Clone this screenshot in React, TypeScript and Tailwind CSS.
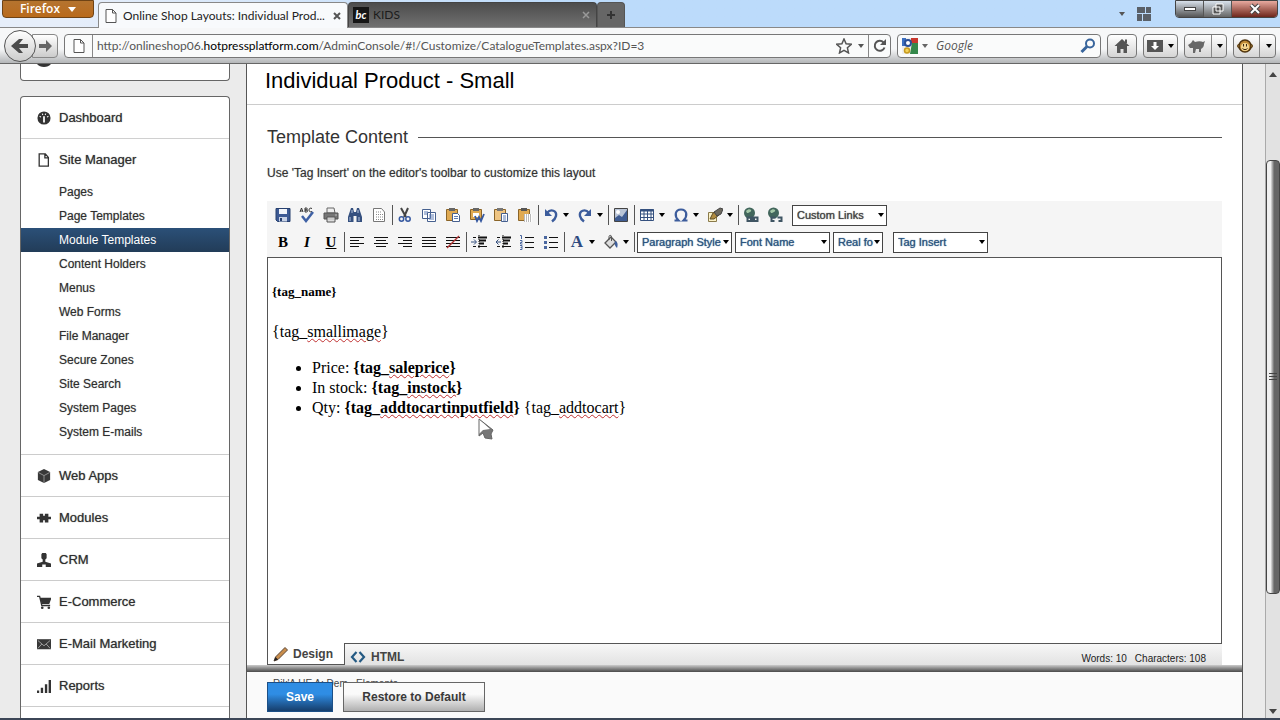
import React from "react";

type Kids = { children?: React.ReactNode };

const Pic = ({ children, size = "size-4" }: Kids & { size?: string }) => (
  <svg viewBox="0 0 16 16" className={size + " shrink-0"} fill="none" aria-hidden="true">
    {children}
  </svg>
);

const Caret = ({ cls = "text-black" }: { cls?: string }) => (
  <svg viewBox="0 0 6 4" className={"h-1 w-1.5 shrink-0 " + cls} aria-hidden="true">
    <path d="M0 0h6L3 4z" fill="currentColor" />
  </svg>
);

const PageIcon = () => (
  <Pic>
    <path d="M3 1.5h6.5L13 5v9.500H3z" fill="#fff" stroke="#555" />
    <path d="M9.500 1.500V5H13" stroke="#555" />
  </Pic>
);

/* ---------- toolbar drawings ---------- */

const navy = "#35507f";

const icons: Record<string, React.ReactNode> = {
  save: (
    <>
      <path d="M1 1.500h14v13H2.500L1 13z" fill="#3d5a94" stroke="#27406f" />
      <path d="M4 2h8v5H4z" fill="#f2f5fa" />
      <path d="M4 10h8v4.500H4z" fill="#c9d3e6" />
      <path d="M5 11h2v3H5z" fill="#27406f" />
    </>
  ),
  spell: (
    <>
      <path d="M1 5l1.500-4L4 5M1.500 4h2M6 1v4h1.500a1 1 0 0 0 0-2H6h1.300a1 1 0 0 0 0-2zM13 1.500c-2-1-3 .2-3 1.500s1 2.500 3 1.500" stroke="#333" />
      <path d="M3 9l4 5 7-9" stroke="#3f61a5" strokeWidth="2.500" />
    </>
  ),
  print: (
    <>
      <path d="M4 1h7l1 5H4z" fill="#eee" stroke="#666" />
      <path d="M1 6h14v6H1z" fill="#777" stroke="#555" />
      <path d="M4 10h8v5H4z" fill="#ddd" stroke="#555" />
      <path d="M5 12h6M12 8h2" stroke="#bbb" />
    </>
  ),
  find: (
    <>
      <path d="M4 1h2l1 4h2l1-4h2l3 9v5H9.500V9h-3v6H1v-5z" fill={navy} />
      <path d="M3 10v4M12 10v4M5 3v3M11 3v3" stroke="#b9c8e4" />
    </>
  ),
  preview: (
    <>
      <path d="M2.500 1.500h8L13.500 5v9.500h-11z" fill="#fff" stroke="#777" />
      <path d="M5 5h5M5 7.500h7M5 10h7M5 12.500h7" stroke="#888" strokeDasharray="1 1" />
    </>
  ),
  cut: (
    <>
      <path d="M4 1l5 9M11 1L7 10" stroke="#444" strokeWidth="2" />
      <circle cx="4.500" cy="12" r="2.200" stroke="#3558a0" strokeWidth="1.500" />
      <circle cx="11" cy="12" r="2.200" stroke="#3558a0" strokeWidth="1.500" />
    </>
  ),
  copy: (
    <>
      <path d="M1.500 2.500h8v9h-8zM6.500 5.500h8v9h-8z" fill="#fff" stroke="#46608f" />
      <path d="M3 5h4M3 7h3M8 8h5M8 10h5M8 12h5" stroke="#5f7db5" />
    </>
  ),
  paste: (
    <>
      <path d="M1.500 2.500h11v11h-11z" fill="#e0aa52" stroke="#8a6428" />
      <path d="M4 1h6v3H4z" fill="#666" />
      <path d="M7.500 6.500h5l2 2v6h-7z" fill="#fff" stroke="#46608f" />
      <path d="M9 9.500h4M9 11.500h4" stroke="#5f7db5" />
    </>
  ),
  pasteword: (
    <>
      <path d="M1.500 2.500h11v10h-11z" fill="#e0aa52" stroke="#8a6428" />
      <path d="M4 1h6v3H4z" fill="#666" />
      <path d="M4 6h6v4H4z" fill="#fff" />
      <path d="M6 9l2 5 2-4 2 4 3-7" stroke="#3558a0" strokeWidth="1.800" />
    </>
  ),
  pasteplain: (
    <>
      <path d="M1.500 2.500h11v11h-11z" fill="#efc583" stroke="#8a6428" />
      <path d="M4 1h6v3H4z" fill="#777" />
      <path d="M8.500 6.500h6v8h-6z" fill="#fff" stroke="#46608f" />
      <path d="M10 9h3M10 11h3M10 13h3" stroke="#5f7db5" />
    </>
  ),
  pastehtml: (
    <>
      <path d="M1.500 2.500h11v11h-11z" fill="#e0aa52" stroke="#8a6428" />
      <path d="M4 1h6v3H4z" fill="#555" />
      <path d="M7 7h8v8H7z" fill="#fff" />
      <path d="M7 8h8M7 10h8M7 12h8M7 14h8" stroke="#777" strokeDasharray="1 1" />
    </>
  ),
  undo: (
    <>
      <path d="M4 6c4-5 10-2 9 3-.5 2.500-2 4-4 5.500" stroke="#3c5c9c" strokeWidth="2.400" />
      <path d="M2 2v7h7z" fill="#3c5c9c" />
    </>
  ),
  redo: (
    <>
      <path d="M12 6C8 1 2 4 3 9c.5 2.500 2 4 4 5.500" stroke="#3c5c9c" strokeWidth="2.400" />
      <path d="M14 2v7H7z" fill="#3c5c9c" />
    </>
  ),
  image: (
    <>
      <path d="M1.500 1.500h13v13h-13z" fill="#b9c4d6" stroke="#444" />
      <path d="M2 14V11l4-3 3 2 5-7v11z" fill="#3f5c92" />
      <circle cx="5" cy="5" r="2" fill="#fff" />
    </>
  ),
  table: (
    <>
      <path d="M1.500 2.500h13v11h-13z" fill="#fff" stroke={navy} />
      <path d="M1 3.500h14" stroke={navy} strokeWidth="2" />
      <path d="M1 7h14M1 10.500h14M5 3v10.500M8.500 3v10.500M12 3v10.500" stroke={navy} />
    </>
  ),
  omega: (
    <path d="M1.500 13.500H5.500C1 9 2 2.500 8 2.500s7 6.500 2.500 11h4" stroke="#3c5c9c" strokeWidth="2.200" />
  ),
  brush: (
    <>
      <path d="M1.500 5.500h8v9h-8z" fill="#fbf2c8" stroke="#8a7a4a" />
      <path d="M3 12l3-6 5-2 1 4-5 4z" fill="#b08b3f" stroke="#5c4b27" />
      <path d="M7 5l6-4 3 1-2 5-4 2z" fill="#6d6a60" stroke="#444" />
    </>
  ),
  link: (
    <>
      <circle cx="6.500" cy="6" r="5.500" fill="#42665c" />
      <path d="M3 4c2-2 4-2 5-1S6 6 4 6z" fill="#a5c9a8" />
      <path d="M4.500 10.500h4v3.500h-4zM10.500 10.500h4v3.500h-4zM7 12h5" stroke="#3f5563" strokeWidth="2" />
    </>
  ),
  unlink: (
    <>
      <circle cx="6.500" cy="6" r="5.500" fill="#42665c" />
      <path d="M3 4c2-2 4-2 5-1S6 6 4 6z" fill="#a5c9a8" />
      <path d="M8.500 10.500h-4v3.500h3M10.500 10.500h4v3.500h-3" stroke="#3f5563" strokeWidth="2" />
    </>
  ),
  left: <path d="M1 3.500h14M1 6.500h9M1 9.500h14M1 12.500h9" stroke="#111" />,
  center: <path d="M1 3.500h14M3 6.500h10M1 9.500h14M3 12.500h10" stroke="#111" />,
  right: <path d="M1 3.500h14M6 6.500h9M1 9.500h14M6 12.500h9" stroke="#111" />,
  justify: <path d="M1 3.500h14M1 6.500h14M1 9.500h14M1 12.500h14" stroke="#111" />,
  nojustify: (
    <>
      <path d="M1 3.500h14M1 6.500h14M1 9.500h14M1 12.500h14" stroke="#111" />
      <path d="M2 14L14 2" stroke="#b03434" strokeWidth="1.500" />
    </>
  ),
  indent: (
    <>
      <path d="M8 1v14" stroke="#111" strokeDasharray="1 1" />
      <path d="M7 3.500h9M8 6.500h7M8 9.500h5" stroke="#111" strokeWidth="2" />
      <path d="M7 12.500h9M2 12.500h3M2 3.500h3" stroke="#111" />
      <path d="M0 8h5M3 5.500L5.500 8 3 10.500" stroke="#35507f" />
    </>
  ),
  outdent: (
    <>
      <path d="M8 1v14" stroke="#111" strokeDasharray="1 1" />
      <path d="M7 3.500h9M8 6.500h7M8 9.500h5" stroke="#111" strokeWidth="2" />
      <path d="M7 12.500h9M2 12.500h3M2 3.500h3" stroke="#111" />
      <path d="M1 8h5M3.500 5.500L1 8l2.500 2.500" stroke="#35507f" />
    </>
  ),
  ol: (
    <>
      <path d="M6 3.500h9M6 8.500h9M6 13.500h9" stroke="#111" />
      <path d="M1 1.500h1.500V5M1 6.500h2v2H1.500v1.500H3.500M1 11.500h2v4H1M1.500 13.500H3" stroke="#4a679f" />
    </>
  ),
  ul: (
    <>
      <path d="M6 3.500h9M6 8.500h9M6 13.500h9" stroke="#111" />
      <path d="M1 2h3v3H1zM1 7h3v3H1zM1 12h3v3H1z" fill="#4a679f" />
    </>
  ),
  bucket: (
    <>
      <path d="M2 9l6-6 5 5-6 6z" fill="#ddd" stroke="#555" strokeWidth="1.300" />
      <path d="M6 6V2.500c0-1.500 2.500-1.500 2.500 0V7" stroke="#555" />
      <path d="M12 7c3 1 3 4 2 7-2-2-3-4-2-7z" fill="#3f5f9c" />
    </>
  ),
};

const Tool = ({ name, label, drop }: { name: string; label: string; drop?: boolean }) => (
  <button type="button" aria-label={label} className={"flex h-6 shrink-0 items-center pl-1 " + (drop ? "w-[34px] gap-1" : "w-6")}>
    <Pic>{icons[name]}</Pic>
    {drop && <Caret />}
  </button>
);

const Letter = ({ children, label }: Kids & { label: string }) => (
  <button type="button" aria-label={label} className="h-6 w-6 shrink-0 text-center font-['Liberation_Serif',serif] text-[15px] leading-6 font-bold text-black">
    {children}
  </button>
);

const Sep = () => (
  <div className="flex h-5 w-0.5 shrink-0 justify-center">
    <div className="w-px bg-[#555]" />
  </div>
);

const Drop = ({ label, cls }: { label: string; cls: string }) => (
  <div className={"relative shrink-0 " + cls}>
    <select aria-label={label} className="block h-[21px] w-full appearance-none overflow-hidden border border-[#444] bg-white pl-1 text-[11px] leading-[19px] [text-shadow:0_0_1px_currentColor]">
      <option>{label}</option>
    </select>
    <span className="pointer-events-none absolute top-0 right-[3px] flex h-[21px] items-center">
      <Caret />
    </span>
  </div>
);

/* ---------- browser frame ---------- */

const NavButton = ({ label, cls, children }: Kids & { label: string; cls: string }) => (
  <button type="button" aria-label={label} className={"flex h-6 shrink-0 items-center justify-around rounded-sm border border-[#777] bg-linear-to-b from-white to-[#d5d5d5] text-[#555] " + cls}>
    {children}
  </button>
);

const Browser = () => (
  <header className="shrink-0 font-['Lato','Open_Sans',sans-serif]">
    <div className="flex h-7 items-start border-b border-[#888] bg-linear-to-r from-[#e6eefa] from-5% to-[#bcdbfb] to-45%">
      <button type="button" className="ml-0.5 flex h-[18px] w-[92px] shrink-0 items-center justify-center gap-2 rounded-b border border-[#6f4315] bg-linear-to-b from-[#b5742f] to-[#b96a1b] font-['Open_Sans',sans-serif] text-[12px] leading-4 font-semibold text-white">
        Firefox
        <svg viewBox="0 0 8 5" className="h-[5px] w-2" aria-hidden="true"><path d="M0 0h8L4 5z" fill="#fff" /></svg>
      </button>
      <div className="mt-0.5 ml-1 flex h-[26px] w-[250px] shrink-0 items-center rounded-t border border-b-0 border-[#888] bg-[#f8fafc] pl-1">
        <PageIcon />
        <span className="ml-1 flex-1 text-[12px] whitespace-nowrap text-[#222]">Online Shop Layouts: Individual Prod...</span>
        <button type="button" aria-label="Close tab" className="mr-1.5 shrink-0 text-[#555]">
          <svg viewBox="0 0 8 8" className="size-2" aria-hidden="true"><path d="M1 1l6 6M7 1L1 7" stroke="currentColor" strokeWidth="2" /></svg>
        </button>
      </div>
      <div className="mt-0.5 flex h-[25px] w-[249px] shrink-0 items-center rounded-t border border-b-0 border-[#444] bg-linear-to-b from-[#4d4d4d] to-[#707070] pl-1">
        <span className="flex size-4 items-center justify-center bg-[#161616] text-[11px] leading-3 font-bold text-white italic">bc</span>
        <span className="ml-1 flex-1 text-[12px] text-[#1c1c1c]">KIDS</span>
        <button type="button" aria-label="Close tab" className="mr-1.5 text-[#999]">
          <svg viewBox="0 0 8 8" className="size-2" aria-hidden="true"><path d="M1 1l6 6M7 1L1 7" stroke="currentColor" strokeWidth="1.500" /></svg>
        </button>
      </div>
      <button type="button" aria-label="New tab" className="mt-0.5 flex h-[25px] w-7 shrink-0 items-center justify-center rounded-t border border-b-0 border-[#555] bg-[#666] text-[#333]">
        <svg viewBox="0 0 10 10" className="size-2.5" aria-hidden="true"><path d="M5 1v8M1 5h8" stroke="currentColor" strokeWidth="2" /></svg>
      </button>
      <div className="ml-auto flex h-full items-start pr-0.5">
        <div className="mt-3 mr-3"><Caret cls="text-[#555]" /></div>
        <svg viewBox="0 0 14 14" className="mt-[7px] mr-6 size-3.5" aria-hidden="true">
          <path d="M0 0h8v6H0zM9 0h5v6H9zM0 7h5v7H0zM6 7h8v7H6z" fill="#5a6068" />
        </svg>
        <div className="flex h-[18px] overflow-hidden rounded-b border border-[#444]">
          <button type="button" aria-label="Minimize" className="flex w-7 items-center justify-center border-r border-[#555] bg-linear-to-b from-[#d9e2ec] to-[#555]">
            <span className="h-1 w-3 border border-[#444] bg-white" />
          </button>
          <button type="button" aria-label="Restore" className="flex w-7 items-center justify-center border-r border-[#555] bg-linear-to-b from-[#d9e2ec] to-[#666]">
            <svg viewBox="0 0 12 12" className="size-3" aria-hidden="true"><path d="M4 1h7v7H4zM1 4h7v7H1z" fill="#555" stroke="#fff" /></svg>
          </button>
          <button type="button" aria-label="Close" className="flex w-[45px] items-center justify-center bg-linear-to-b from-[#e8aaa0] to-[#6e261c]">
            <svg viewBox="0 0 12 12" className="size-3" aria-hidden="true"><path d="M2 2l8 8M10 2l-8 8" stroke="#444" strokeWidth="4" /><path d="M2 2l8 8M10 2l-8 8" stroke="#fff" strokeWidth="2" /></svg>
          </button>
        </div>
      </div>
    </div>
    <div className="flex h-9 items-center border-b border-[#666] bg-linear-to-b from-[#f6f7f8] from-60% to-[#b4b6b8] pr-1 pl-1">
      <button type="button" aria-label="Back" className="z-10 flex size-8 shrink-0 items-center justify-center rounded-full border border-[#555] bg-linear-to-b from-white to-[#ccc]">
        <svg viewBox="0 0 18 16" className="h-4 w-[18px]" aria-hidden="true"><path d="M0 8l8-7h4L8 6h9v4H8l4 5H8z" fill="#4c4c4c" /></svg>
      </button>
      <button type="button" aria-label="Forward" className="-ml-1 flex h-6 w-[26px] shrink-0 items-center justify-center rounded-r-sm border border-[#888] bg-linear-to-b from-white to-[#ccc]">
        <svg viewBox="0 0 14 14" className="size-3.5" aria-hidden="true"><path d="M14 7L8 1v4H1v4h7v4z" fill="#666" /></svg>
      </button>
      <div className="ml-1.5 flex h-6 min-w-0 flex-1 items-center rounded-sm border border-[#777] bg-[#fafbfb]">
        <span className="flex h-full w-7 shrink-0 items-center justify-center border-r border-[#888]"><PageIcon /></span>
        <p className="ml-1 min-w-0 flex-1 truncate text-[12px] text-[#555]">
          http://onlineshop06.<span className="text-black">hotpressplatform.com</span>/AdminConsole/#!/Customize/CatalogueTemplates.aspx?ID=3
        </p>
        <button type="button" aria-label="Bookmark" className="flex items-center gap-1.5 pr-1">
          <Pic><path d="M8 1l2.100 4.800 5.200.5-3.900 3.500 1.100 5.100L8 12.300l-4.500 2.600 1.100-5.100L.7 6.300l5.200-.5z" stroke="#555" strokeWidth="1.500" /></Pic>
          <Caret cls="text-[#555]" />
        </button>
        <button type="button" aria-label="Reload" className="flex h-full w-[22px] items-center justify-center border-l border-[#888]">
          <Pic><path d="M12.500 9.500a5 5 0 1 1-1-5" stroke="#555" strokeWidth="2" /><path d="M14 1v6H8z" fill="#555" /></Pic>
        </button>
      </div>
      <div className="ml-1.5 flex h-6 w-[204px] shrink-0 items-center rounded-sm border border-[#777] bg-[#fafbfb] pr-1 pl-1">
        <Pic>
          <path d="M0 0h16v16H0z" fill="#eee" />
          <path d="M9 0h7v5H9z" fill="#c8382e" /><path d="M10 5h6v11H8z" fill="#34884b" />
          <path d="M0 0h4v8H0z" fill="#3c6fc0" />
          <circle cx="6" cy="5" r="3" fill="#fff" stroke="#2b4f96" strokeWidth="2" />
          <circle cx="5" cy="12.500" r="2.500" fill="#f4d35a" stroke="#c79b20" strokeWidth="1.500" />
        </Pic>
        <span className="ml-1"><Caret cls="text-[#666]" /></span>
        <input aria-label="Search Google" placeholder="Google" className="ml-2 min-w-0 flex-1 bg-transparent font-['Open_Sans',sans-serif] text-[12px] italic outline-none placeholder:text-[#555]" />
        <Pic><circle cx="10" cy="5.500" r="4" stroke="#38659c" strokeWidth="2" /><path d="M7 8.500L1.500 14" stroke="#38659c" strokeWidth="3" /></Pic>
      </div>
      <NavButton label="Home" cls="ml-1.5 w-[30px]">
        <Pic><path d="M8 1l7.500 7H13v7H9.500v-4h-3v4H3V8H.5z" fill="#555" /><path d="M11 1.500h2V5h-2z" fill="#555" /></Pic>
      </NavButton>
      <NavButton label="Downloads" cls="ml-1.5 w-[35px]">
        <Pic><path d="M0 2h16v12H0z" fill="#555" /><path d="M6.500 4h3v4H12l-4 4-4-4h2.500z" fill="#fff" /></Pic>
        <Caret />
      </NavButton>
      <NavButton label="Add-on" cls="ml-1.5 w-[43px]">
        <svg viewBox="0 0 18 16" className="h-4 w-[18px]" aria-hidden="true"><path d="M0 7l3-2 2-3 2 2c3-1 6-1 8 0l2-1-1 3c0 2-1 4-3 5v3h-2v-3H8l-1 4H5v-5L2 10z" fill="#686868" /></svg>
        <span className="h-full w-px bg-[#888]" />
        <Caret />
      </NavButton>
      <NavButton label="Monkey scripts" cls="ml-1.5 w-[43px]">
        <Pic>
          <circle cx="2.500" cy="8" r="2" fill="#d9ac55" stroke="#5c3f16" /><circle cx="13.500" cy="8" r="2" fill="#d9ac55" stroke="#5c3f16" />
          <circle cx="8" cy="8" r="6" fill="#c08a34" stroke="#4f3510" strokeWidth="1.500" />
          <ellipse cx="8" cy="9" rx="4" ry="4" fill="#f4d691" />
          <path d="M6.500 6v2.500M9.500 6v2.500M5.500 10.500c1.500 1.500 3.500 1.500 5 0" stroke="#3d290d" />
        </Pic>
        <span className="h-full w-px bg-[#888]" />
        <Caret />
      </NavButton>
    </div>
  </header>
);

/* ---------- sidebar ---------- */

const menuIcons: Record<string, React.ReactNode> = {
  dashboard: (
    <>
      <circle cx="8" cy="8" r="7.500" fill="#333" />
      <path d="M3 6l1.500 1M6 3l.7 1.500M10 3l-.7 1.500M13 6l-1.500 1" stroke="#fff" strokeWidth="1.200" />
      <path d="M8 6v7" stroke="#fff" strokeWidth="2" />
    </>
  ),
  page: <path d="M2.500 1h7L13 5v10H2.500zM9 1v4.500h4" stroke="#333" strokeWidth="1.500" />,
  cube: (
    <>
      <path d="M8 0l7 3.500v9L8 16l-7-3.500v-9z" fill="#383838" />
      <path d="M1.500 4L8 7.500 14.500 4M8 7.500V16" stroke="#999" />
    </>
  ),
  modules: <path d="M3 3h4v2.500h2V3h4v3.500h3v3h-3V13H9v-2.500H7V13H3V9.500H0v-3h3z" fill="#333" />,
  crm: <path d="M6 0h4l1 1.500V6L9.500 7.500V10l6.500 2v4h-6v-3H6v3H0v-4l6.500-2V7.500L5 6V1.500z" fill="#333" />,
  cart: (
    <>
      <path d="M0 1.500h3L5.500 12H15M4 4h11.500l-2 5.500H5" stroke="#333" strokeWidth="1.500" />
      <path d="M4 4h11.500l-2 5.500H5z" fill="#333" />
      <circle cx="6" cy="14.500" r="1.500" fill="#333" /><circle cx="13.500" cy="14.500" r="1.500" fill="#333" />
    </>
  ),
  mail: (
    <>
      <path d="M0 2.500h16v11.500H0z" fill="#383838" />
      <path d="M1 4l7 6 7-6M1 13l4.500-5M15 13l-4.500-5" stroke="#aaa" />
    </>
  ),
  reports: <path d="M0 13h2.500v3H0zM4.300 10h2.700v6H4.300zM9 6h2.700v10H9zM13.300 1H16v15h-2.700z" fill="#333" />,
};

const MenuHead = ({ icon, label }: { icon: string; label: string }) => (
  <a href="#" className="flex items-center gap-2 pl-4 text-[13px] leading-5 text-[#2e2e2e] [text-shadow:0_0_1px_#777]">
    <Pic size="size-3.5">{menuIcons[icon]}</Pic>
    {label}
  </a>
);

const subItems = ["Pages", "Page Templates", "Module Templates", "Content Holders", "Menus", "Web Forms", "File Manager", "Secure Zones", "Site Search", "System Pages", "System E-mails"];

const rest = [
  ["cube", "Web Apps"],
  ["modules", "Modules"],
  ["crm", "CRM"],
  ["cart", "E-Commerce"],
  ["mail", "E-Mail Marketing"],
  ["reports", "Reports"],
];

const Sidebar = () => (
  <aside className="flex w-[210px] shrink-0 flex-col">
    <div className="h-[17px] shrink-0 overflow-hidden rounded-b border border-t-0 border-[#666] bg-white pl-4">
      <svg viewBox="0 0 14 4" className="h-1 w-3.5" aria-hidden="true"><path d="M0 0h14c-3 4-11 4-14 0z" fill="#333" /></svg>
    </div>
    <nav aria-label="Admin menu" className="mt-[15px] min-h-0 flex-1 overflow-hidden rounded-t border border-b-0 border-[#666] bg-white">
      <ul>
        <li className="border-b border-[#d0d0d0] pt-[11px] pb-2.5"><MenuHead icon="dashboard" label="Dashboard" /></li>
        <li className="border-b border-[#ccc] pt-[11px] pb-2.5">
          <MenuHead icon="page" label="Site Manager" />
          <ul className="mt-2.5">
            {subItems.map((s) => (
              <li key={s}>
                <a
                  href="#"
                  className={
                    "block pl-[38px] text-[12px] leading-6 " +
                    (s === "Module Templates" ? "bg-linear-to-b from-[#2b5078] to-[#223c58] text-white" : "text-[#2e2e2e] [text-shadow:0_0_1px_#999]")
                  }
                >
                  {s}
                </a>
              </li>
            ))}
          </ul>
        </li>
        {rest.map(([i, l]) => (
          <li key={l} className="border-b border-[#ccc] pt-[11px] pb-2.5"><MenuHead icon={i} label={l} /></li>
        ))}
      </ul>
    </nav>
  </aside>
);

/* ---------- editor ---------- */

const Toolbar = () => (
  <div role="toolbar" aria-label="Editor" className="flex flex-col gap-px bg-[#f5f5f5] pt-px pb-0.5 pl-1">
    <div className="flex h-[26px] items-center text-[#444]">
      <Tool name="save" label="Save" />
      <Tool name="spell" label="Spell check" />
      <Tool name="print" label="Print" />
      <Tool name="find" label="Find" />
      <Tool name="preview" label="Preview" />
      <Sep />
      <Tool name="cut" label="Cut" />
      <Tool name="copy" label="Copy" />
      <Tool name="paste" label="Paste" />
      <Tool name="pasteword" label="Paste from Word" />
      <Tool name="pasteplain" label="Paste plain text" />
      <Tool name="pastehtml" label="Paste as HTML" />
      <Sep />
      <Tool name="undo" label="Undo" drop />
      <Tool name="redo" label="Redo" drop />
      <Sep />
      <Tool name="image" label="Image" />
      <Sep />
      <Tool name="table" label="Table" drop />
      <Tool name="omega" label="Symbol" drop />
      <Tool name="brush" label="Format" drop />
      <Sep />
      <Tool name="link" label="Link" />
      <Tool name="unlink" label="Remove link" />
      <Drop label="Custom Links" cls="ml-[5px] w-[95px]" />
    </div>
    <div className="flex h-[26px] items-center text-[#2b5580]">
      <Letter label="Bold">B</Letter>
      <Letter label="Italic"><i>I</i></Letter>
      <Letter label="Underline"><u>U</u></Letter>
      <Sep />
      <Tool name="left" label="Align left" />
      <Tool name="center" label="Align center" />
      <Tool name="right" label="Align right" />
      <Tool name="justify" label="Justify" />
      <Tool name="nojustify" label="No alignment" />
      <Sep />
      <Tool name="indent" label="Indent" />
      <Tool name="outdent" label="Outdent" />
      <Tool name="ol" label="Numbered list" />
      <Tool name="ul" label="Bulleted list" />
      <Sep />
      <button type="button" aria-label="Text color" className="flex h-6 w-[34px] shrink-0 items-center gap-1 pl-1">
        <span className="w-4 text-center font-['Liberation_Serif',serif] text-[17px] font-bold text-[#2f4a80]">A</span>
        <Caret />
      </button>
      <Tool name="bucket" label="Fill color" drop />
      <Sep />
      <div className="flex gap-[3px] pl-0.5">
        <Drop label="Paragraph Style" cls="w-[95px]" />
        <Drop label="Font Name" cls="w-[95px]" />
        <Drop label="Real fo" cls="w-[50px]" />
      </div>
      <Drop label="Tag Insert" cls="ml-2.5 w-[95px]" />
    </div>
  </div>
);

const Sq = ({ children }: Kids) => (
  <span className="underline decoration-[#c03030] decoration-wavy decoration-1 underline-offset-1">{children}</span>
);

const Editor = () => (
  <div className="mt-5 flex min-h-0 flex-1 flex-col">
    <Toolbar />
    <div className="relative min-h-0 flex-1 border border-b-0 border-[#555] bg-white px-1 font-['Liberation_Serif',serif] text-[16px] leading-5 text-black">
      <h5 className="mt-6 text-[13px] font-bold">{"{tag_name}"}</h5>
      <p className="mt-5">{"{tag_"}<Sq>smallimage</Sq>{"}"}</p>
      <ul className="mt-4 list-disc pl-10">
        <li>Price: <b>{"{tag_"}<Sq>saleprice</Sq>{"}"}</b></li>
        <li>In stock: <b>{"{tag_"}<Sq>instock</Sq>{"}"}</b></li>
        <li>Qty: <b>{"{tag_"}<Sq>addtocartinputfield</Sq>{"}"}</b> {"{tag_"}<Sq>addtocart</Sq>{"}"}</li>
      </ul>
      <svg viewBox="0 0 16 22" className="absolute top-[160px] left-[210px] h-[22px] w-4" aria-hidden="true">
        <path d="M1 1v17l4-3 2 5 7 1-1-5 2-4z" fill="#777" />
        <path d="M1 1v15l4-4 7-1z" fill="#fff" />
        <path d="M1 1v17l4-3 2 5 7 1-1-5 2-4z" fill="none" stroke="#666" />
      </svg>
    </div>
    <div className="flex h-[22px] shrink-0 items-stretch text-[12px] font-bold text-[#444]">
      <button type="button" className="flex w-[78px] shrink-0 items-center gap-1 border border-t-0 border-[#555] bg-white pl-[5px]">
        <Pic>
          <path d="M1 15l1.500-4L12 1.500 14.500 4 5 13.500z" fill="#c98d4b" stroke="#5b4636" />
          <path d="M1 15l1.500-4L5 13.500z" fill="#222" />
        </Pic>
        Design
      </button>
      <div className="flex flex-1 items-center border-t border-[#555] bg-linear-to-b from-[#f7f7f7] to-[#e2e2e2] pt-1">
        <button type="button" className="flex items-center gap-[5px] pl-[5px]">
          <Pic><path d="M6.500 3L2 8l4.500 5M9.500 3L14 8l-4.500 5" stroke="#245a83" strokeWidth="2.200" /></Pic>
          HTML
        </button>
        <p className="mt-1 mr-4 ml-auto flex gap-2 text-[10px] font-normal text-[#222]">
          <span>Words: 10</span>
          <span>Characters: 108</span>
        </p>
      </div>
    </div>
  </div>
);

export default function App() {
  return (
    <div className="flex h-screen flex-col overflow-hidden bg-[#ebebeb] font-['Liberation_Sans',Arial,sans-serif]">
      <Browser />
      <div className="flex min-h-0 flex-1 pl-5">
        <Sidebar />
        <main className="ml-4 flex min-w-0 flex-1 flex-col border-x border-[#555] bg-white">
          <h1 className="shrink-0 border-b border-[#ccc] pt-px pb-[7px] pl-[18px] text-[22px] leading-8 text-black">Individual Product - Small</h1>
          <section className="flex min-h-0 flex-1 flex-col px-5 pt-5">
            <div className="flex items-center gap-2.5">
              <h2 className="text-[18px] leading-6 text-[#333]">Template Content</h2>
              <div className="h-px flex-1 bg-[#555]" />
            </div>
            <p className="mt-4 text-[12px] leading-4 text-[#333] [text-shadow:0_0_1px_#999]">Use 'Tag Insert' on the editor's toolbar to customize this layout</p>
            <Editor />
          </section>
          <div className="h-[7px] shrink-0 bg-linear-to-b from-[#ccc] to-[#4a4a4a]" />
          <footer className="relative flex h-[46px] shrink-0 items-center gap-2.5 bg-[#fafafa] px-5">
            <p className="absolute top-1.5 left-[26px] text-[10px] leading-3 text-[#444]">Rik'A HE A: Dem &nbsp; Elements</p>
            <button type="button" className="relative mt-1 h-[30px] w-[66px] border border-[#1c4f86] bg-linear-to-b from-[#2f8de4] from-40% to-[#163e6c] text-[12px] font-bold text-white">Save</button>
            <button type="button" className="relative mt-1 h-[30px] w-[142px] border border-[#666] bg-linear-to-b from-[#fafafa] from-40% to-[#b0b0b0] text-[12px] font-bold text-[#3a3a3a]">Restore to Default</button>
          </footer>
        </main>
        <div className="ml-[22px] flex w-[15px] shrink-0 flex-col items-center border-l border-[#aaa] bg-[#e2e2e2]">
          <svg viewBox="0 0 8 5" className="mt-2 h-[5px] w-2 shrink-0" aria-hidden="true"><path d="M0 5h8L4 0z" fill="#444" /></svg>
          <div className="flex w-full flex-1 flex-col">
            <div className="grow-[83]" />
            <div className="flex grow-[424] items-center justify-center rounded-sm border border-[#444] bg-linear-to-r from-[#f0f0f0] from-30% to-[#666] to-60%">
              <div className="flex flex-col gap-0.5">
                <div className="h-px w-2 bg-[#444]" />
                <div className="h-px w-2 bg-[#444]" />
                <div className="h-px w-2 bg-[#444]" />
              </div>
            </div>
            <div className="grow-[115]" />
          </div>
          <svg viewBox="0 0 8 5" className="mb-1 h-[5px] w-2 shrink-0" aria-hidden="true"><path d="M0 0h8L4 5z" fill="#444" /></svg>
        </div>
      </div>
      <div className="h-0.5 shrink-0 bg-[#3c4657]" />
    </div>
  );
}
